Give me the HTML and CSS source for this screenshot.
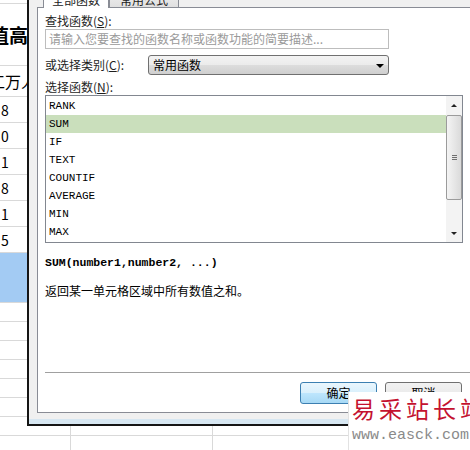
FILE: index.html
```html
<!DOCTYPE html>
<html lang="zh-CN">
<head>
    <meta charset="UTF-8">
    <title>插入函数</title>
    <link rel="stylesheet" href="styles.css">
</head>

<body>

    <!-- 背后的工作表 -->
    <div class="sheet">
        <div class="row row-thin"></div>
        <div class="row row-title"><span class="title">值高</span></div>
        <div class="row row-head"><span class="unit">工万人</span></div>
        <div class="row row-num"><span class="num">8</span></div>
        <div class="row row-num"><span class="num">0</span></div>
        <div class="row row-num"><span class="num">1</span></div>
        <div class="row row-num"><span class="num">8</span></div>
        <div class="row row-num"><span class="num">1</span></div>
        <div class="row row-num"><span class="num">5</span></div>
        <div class="row row-sel"><span class="sel-cell"></span></div>
        <div class="row row-low"></div>
        <div class="row row-low"></div>
        <div class="row row-low"></div>
        <div class="row row-low"></div>
        <div class="row row-low"></div>
        <div class="row row-low"></div>
        <div class="row row-low"></div>
        <div class="row row-low"></div>
    </div>

    <!-- 插入函数 对话框 -->
    <div class="dialog">
        <div class="tabs">
            <div class="tab tab-on">全部函数</div>
            <div class="tab">常用公式</div>
        </div>

        <div class="panel">
            <div class="label first">查找函数(<u>S</u>):</div>
            <div class="search">请输入您要查找的函数名称或函数功能的简要描述...</div>

            <div class="category">
                <div class="label cat-label">或选择类别(<u>C</u>):</div>
                <div class="select">
                    <span>常用函数</span>
                    <span class="arrow"></span>
                </div>
            </div>

            <div class="label pick">选择函数(<u>N</u>):</div>
            <div class="list">
                <div class="items">
                    <div class="item">RANK</div>
                    <div class="item on">SUM</div>
                    <div class="item">IF</div>
                    <div class="item">TEXT</div>
                    <div class="item">COUNTIF</div>
                    <div class="item">AVERAGE</div>
                    <div class="item">MIN</div>
                    <div class="item">MAX</div>
                </div>
                <div class="scrollbar">
                    <div class="sb-btn"><span class="tri-up"></span></div>
                    <div class="thumb">
                        <span class="grip"></span>
                        <span class="grip"></span>
                        <span class="grip"></span>
                    </div>
                    <div class="track"></div>
                    <div class="sb-btn sb-down"><span class="tri-down"></span></div>
                </div>
            </div>

            <div class="sig">SUM(number1,number2, ...)</div>
            <div class="desc">返回某一单元格区域中所有数值之和。</div>

            <div class="footer">
                <div class="btn btn-ok">确定</div>
                <div class="btn">取消</div>
            </div>
        </div>
    </div>

    <!-- 水印 -->
    <div class="watermark">
        <div class="wm-title">易采站长站</div>
        <div class="wm-url">www.easck.com</div>
    </div>

</body>
</html>
```

FILE: styles.css
```css
body, html {
    margin: 0;
    padding: 0;
}

body {
    width: 470px;
    height: 450px;
    overflow: hidden;
    position: relative;
    background: #fff;
    font-family: "Noto Sans CJK SC", "Liberation Sans", sans-serif;
    font-size: 12px;
    color: #1a1a1a;
}

/* 工作表 */
.sheet {
    height: 100%;
    background-image:
        linear-gradient(to right, transparent 70px, #d9d9d9 70px, #d9d9d9 71px, transparent 71px),
        linear-gradient(to right, transparent 212px, #d9d9d9 212px, #d9d9d9 213px, transparent 213px),
        linear-gradient(to right, transparent 348px, #d9d9d9 348px, #d9d9d9 349px, transparent 349px);
}

.row {
    box-sizing: border-box;
    border-bottom: 1px solid #d9d9d9;
    display: flex;
    align-items: center;
    white-space: nowrap;
    overflow: hidden;
    color: #000;
}

.row-thin { height: 4px; }
.row-title { height: 62px; }
.row-head { height: 31px; }
.row-num { height: 26px; }
.row-sel { height: 50px; align-items: stretch; }
.row-low { height: 19px; }

.title {
    font-size: 19px;
    font-weight: bold;
    margin-left: -10px;
}

.unit {
    font-size: 16px;
    margin-left: -11px;
}

.num {
    font-size: 14px;
    padding-left: 1px;
}

.sel-cell {
    width: 70px;
    background: #a3cbf3;
}

/* 对话框 */
.dialog {
    position: absolute;
    left: 27px;
    top: -14px;
    width: 460px;
    height: 440px;
    box-sizing: border-box;
    border-left: 2px solid #151515;
    border-bottom: 2px solid #151515;
    padding: 0 0 11px 8px;
    background: linear-gradient(to bottom, #f0f0f0 calc(100% - 5px), #d7e7f2 calc(100% - 5px));
    display: flex;
    flex-direction: column;
}

.tabs {
    height: 21px;
    display: flex;
    align-items: flex-start;
}

.tab {
    box-sizing: border-box;
    width: 70px;
    height: 19px;
    margin-top: 2px;
    padding-top: 4px;
    line-height: 14px;
    text-align: center;
    border: 1px solid #898c95;
    border-bottom: none;
    background: linear-gradient(#f2f2f2, #e0e0e0);
    color: #222;
}

.tab-on {
    width: 66px;
    height: 22px;
    margin: 0 0 0 6px;
    padding-top: 6px;
    background: #fff;
    position: relative;
    z-index: 1;
}

.panel {
    flex: 1;
    box-sizing: border-box;
    background: #fff;
    border: 1px solid #898c95;
    padding: 0 24px 0 7px;
    display: flex;
    flex-direction: column;
}

.label {
    line-height: 16px;
    color: #1e1e1e;
}

.label u {
    text-underline-offset: 1px;
}

.first {
    margin-top: 5px;
}

.search {
    box-sizing: border-box;
    width: 344px;
    height: 20px;
    border: 1px solid #bdbdbd;
    padding-left: 3px;
    line-height: 17px;
    color: #9a9a9a;
    white-space: nowrap;
    overflow: hidden;
}

.category {
    margin-top: 6px;
    display: flex;
    align-items: center;
}

.cat-label {
    width: 103px;
}

.select {
    box-sizing: border-box;
    width: 241px;
    height: 20px;
    border: 1px solid #707070;
    border-radius: 3px;
    background: linear-gradient(#f3f3f3, #ebebeb 50%, #dddddd 50%, #cfcfcf);
    padding: 0 4px 0 4px;
    display: flex;
    align-items: center;
    justify-content: space-between;
    color: #000;
    line-height: 18px;
}

.arrow {
    width: 0;
    height: 0;
    border-left: 4px solid transparent;
    border-right: 4px solid transparent;
    border-top: 4px solid #000;
    margin-top: 1px;
}

.pick {
    margin-top: 4px;
}

.list {
    box-sizing: border-box;
    width: 418px;
    height: 148px;
    border: 1px solid #828790;
    display: flex;
}

.items {
    flex: 1;
    padding-top: 1px;
}

.item {
    height: 18px;
    line-height: 18px;
    padding-left: 3px;
    font-family: "Liberation Mono", monospace;
    font-size: 11px;
    color: #000;
}

.item.on {
    background: #cadfbc;
}

.scrollbar {
    width: 16px;
    background: #f3f3f3;
    display: flex;
    flex-direction: column;
}

.sb-btn {
    height: 19px;
    display: flex;
    align-items: center;
    justify-content: center;
}

.sb-down {
    height: 18px;
}

.tri-up, .tri-down {
    width: 0;
    height: 0;
    border-left: 3px solid transparent;
    border-right: 3px solid transparent;
}

.tri-up { border-bottom: 3px solid #222; }
.tri-down { border-top: 3px solid #222; }

.thumb {
    box-sizing: border-box;
    height: 85px;
    border: 1px solid #9b9b9b;
    border-radius: 2px;
    background: linear-gradient(to right, #f4f4f4, #dadada);
    display: flex;
    flex-direction: column;
    align-items: center;
    justify-content: center;
    gap: 1px;
}

.grip {
    width: 5px;
    height: 1px;
    background: #6f6f6f;
}

.track {
    flex: 1;
}

.sig {
    margin-top: 13px;
    line-height: 14px;
    font-family: "Liberation Mono", monospace;
    font-size: 11.5px;
    font-weight: bold;
    color: #000;
}

.desc {
    margin-top: 13px;
    line-height: 16px;
    color: #000;
}

.footer {
    margin: auto -24px 0 0;
    padding: 9px 24px 8px 0;
    border-top: 1px solid #a0a0a0;
    display: flex;
    justify-content: flex-end;
    gap: 8px;
}

.btn {
    box-sizing: border-box;
    width: 77px;
    height: 22px;
    border: 1px solid #707070;
    border-radius: 3px;
    background: linear-gradient(#f2f2f2, #ebebeb 50%, #dddddd 50%, #cfcfcf);
    line-height: 20px;
    text-align: center;
    color: #000;
}

.btn-ok {
    border-color: #3c7fb1;
    background: linear-gradient(#eaf6fd, #d9f0fc 50%, #bee6fd 50%, #a7d9f5);
}

/* 水印 */
.watermark {
    position: absolute;
    left: 348px;
    top: 392px;
    width: 130px;
    height: 60px;
    background: #fff;
    border-left: 1px solid #e2e2e2;
    white-space: nowrap;
}

.wm-title {
    margin-top: 2px;
    padding-left: 3px;
    font-size: 23px;
    line-height: 28px;
    letter-spacing: 4px;
    color: #c4122f;
}

.wm-url {
    margin-top: 6px;
    padding-left: 3px;
    font-family: "Liberation Mono", monospace;
    font-size: 15px;
    line-height: 16px;
    color: #8a8a8a;
}
```
